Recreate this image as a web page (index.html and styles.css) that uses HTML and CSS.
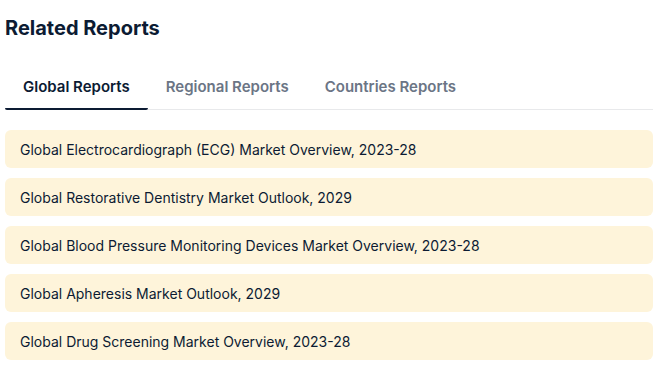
FILE: index.html
```html
<!DOCTYPE html>
<html>
<head>
<meta charset="utf-8">
<link rel="stylesheet" href="styles.css">
</head>
<body>
<div class="wrap">
  <h2 class="title">Related Reports</h2>
  <div class="tabs">
    <div class="tab active">Global Reports</div>
    <div class="tab">Regional Reports</div>
    <div class="tab">Countries Reports</div>
  </div>
  <ul class="list">
    <li class="item">Global Electrocardiograph (ECG) Market Overview, 2023-28</li>
    <li class="item">Global Restorative Dentistry Market Outlook, 2029</li>
    <li class="item">Global Blood Pressure Monitoring Devices Market Overview, 2023-28</li>
    <li class="item">Global Apheresis Market Outlook, 2029</li>
    <li class="item">Global Drug Screening Market Overview, 2023-28</li>
  </ul>
</div>
</body>
</html>
```

FILE: styles.css
```css
* { box-sizing: border-box; }
body {
  margin: 0;
  background: #fff;
  font-family: Inter, "Noto Sans", sans-serif;
  color: #0c1b33;
}
.wrap {
  width: 648px;
  margin-left: 5px;
  padding-top: 14px;
}
.title {
  margin: 0;
  font-size: 20px;
  line-height: 28px;
  font-weight: 700;
  color: #0c1b33;
}
.tabs {
  display: flex;
  margin-top: 26px;
  border-bottom: 1px solid #e8e9eb;
}
.tab {
  padding: 9px 18px 11px;
  font-size: 15px;
  line-height: 20px;
  font-weight: 600;
  color: #6b7585;
  margin-bottom: -1px;
  border-bottom: 2px solid transparent;
}
.tab.active {
  color: #0c1b33;
  border-bottom-color: #0c1b33;
  border-radius: 0 0 2px 2px;
}
.list {
  list-style: none;
  margin: 20px 0 0;
  padding: 0;
  display: flex;
  flex-direction: column;
  gap: 10px;
}
.item {
  height: 38px;
  display: flex;
  align-items: center;
  padding: 0 15px;
  background: #fef4da;
  border-radius: 6px;
  font-size: 14px;
  color: #0c1b33;
}
```
